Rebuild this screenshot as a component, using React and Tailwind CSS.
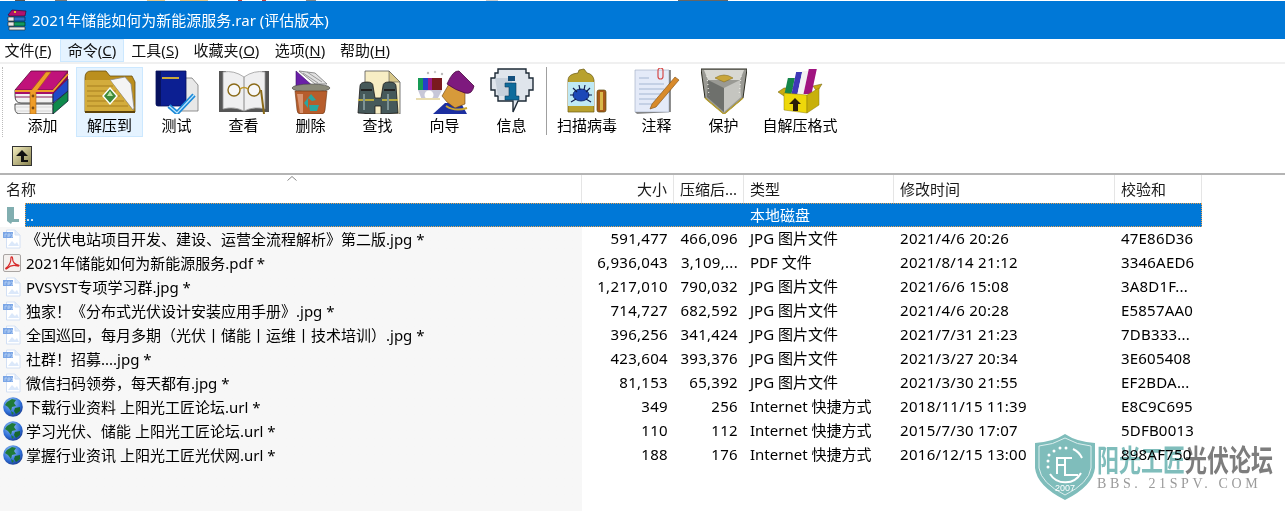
import React from 'react';

const FONT = "font-['Noto_Sans','Noto_Sans_CJK_SC',sans-serif]";

// --- toolbar drawings ---
const Books = () => (
  <svg viewBox="0 0 56 44" className="w-[56px] h-[44px] -ml-[3px]">
    <path d="M2 34 L40 34 L40 44 L8 44 Q2 44 2 39Z" fill="#f4f4f4" stroke="#222" strokeWidth="0.8" />
    <path d="M2 37 H40 M2 41 H40" stroke="#c9c9c9" strokeWidth="0.7" />
    <path d="M40 34 L55 21 L55 31 L40 44Z" fill="#0f8a4c" stroke="#123" strokeWidth="0.8" />
    <path d="M2 20 L40 20 L40 33 L8 33 Q2 33 2 26Z" fill="#f2f2f2" stroke="#222" strokeWidth="0.8" />
    <path d="M2 27 H40" stroke="#8a1c58" strokeWidth="1.2" />
    <path d="M40 20 L55 9 L55 21 L40 33Z" fill="#1f49c8" stroke="#123" strokeWidth="0.8" />
    <path d="M2 20 L18 1 L55 1 L40 20Z" fill="#c0127a" stroke="#5a0838" strokeWidth="0.8" />
    <path d="M2 20 L40 20 L40 24 L2 24Z" fill="#a50e68" />
    <path d="M40 20 L55 1 L55 9 L40 24Z" fill="#7d0c50" />
    <path d="M17 22 L33 2 L38 2 L23 22 L23 44 L17 44Z" fill="#ef9d28" stroke="#9a5a10" strokeWidth="0.6" />
    <path d="M2 21 H40 L55 4" fill="none" stroke="#ef9d28" strokeWidth="1.8" />
    <circle cx="20" cy="26" r="1.4" fill="#7a4a10" />
    <circle cx="20" cy="38" r="1.4" fill="#7a4a10" />
  </svg>
);

const Extract = () => (
  <svg viewBox="0 0 52 44" className="w-[52px] h-[44px]">
    <path d="M1 8 Q1 1 7 1 L22 1 L26 6 L48 6 L51 12 L51 42 L1 42Z" fill="#bb8f1e" stroke="#6b4e0c" strokeWidth="0.8" />
    <path d="M26 10 L41 7 L47 14 L50 38 L49 40Z" fill="#f4f4f4" stroke="#8a8a8a" strokeWidth="0.8" />
    <path d="M1 10 L26 10 L50 42 L1 42Z" fill="#d3ac3c" />
    <path d="M3 16H29M3 21H32M3 26H36M3 31H40M3 36H44" stroke="#a87f1e" strokeWidth="1.1" />
    <path d="M1 42 L51 42" stroke="#5e440a" strokeWidth="1.8" />
    <path d="M26 18 L33 26 L26 34 L19 26Z" fill="#3e8a3a" stroke="#fff" strokeWidth="1.4" />
    <path d="M26 21 L29 26 L23 26Z" fill="#b6e0a0" />
  </svg>
);

const Test = () => (
  <svg viewBox="0 0 44 44" className="w-[44px] h-[44px]">
    <path d="M26 8 L37 8 L43 15 L43 41 L26 41Z" fill="#e8e8e8" stroke="#777" strokeWidth="0.8" />
    <path d="M1 1 L31 1 L31 36 L3 36 Q1 36 1 34Z" fill="#0c1f92" stroke="#05105a" strokeWidth="0.8" />
    <path d="M1 1 L6 1 L6 36 L3 36 Q1 36 1 34Z" fill="#07125f" />
    <path d="M7 8 H24" stroke="#c9a93a" strokeWidth="2" />
    <path d="M14 36 L22 43 L39 25" fill="none" stroke="#1b8ad8" strokeWidth="4.5" />
    <path d="M14 36 L22 43 L39 25" fill="none" stroke="#bfe6ff" strokeWidth="1.2" />
  </svg>
);

const View = () => (
  <svg viewBox="0 0 52 44" className="w-[52px] h-[44px]">
    <path d="M1 1 L8 1 L8 38 L44 38 L44 1 L51 1 L51 42 L1 42Z" fill="#555" />
    <path d="M5 2 Q16 0 26 7 Q36 0 47 2 L47 39 Q36 36 26 41 Q16 36 5 39Z" fill="#efeff0" stroke="#9a9a9a" strokeWidth="0.8" />
    <path d="M26 7 L26 41" stroke="#888" strokeWidth="1" />
    <circle cx="16" cy="20" r="6" fill="#f7f7f7" stroke="#8a6a18" strokeWidth="1.4" />
    <circle cx="36" cy="20" r="6" fill="#f7f7f7" stroke="#8a6a18" strokeWidth="1.4" />
    <path d="M22 19 Q26 16 30 19" fill="none" stroke="#c09a2a" strokeWidth="1.6" />
    <path d="M43 20 L46 44" stroke="#8a6a18" strokeWidth="2" />
  </svg>
);

const Recycle = () => (
  <svg viewBox="0 0 40 44" className="w-[40px] h-[44px]">
    <path d="M5 1 L5 18 L24 18Z" fill="#6a1fa8" stroke="#3a0f66" strokeWidth="0.6" />
    <path d="M8 1 L24 14 L36 14 L24 3Z" fill="#e2e2e2" stroke="#777" strokeWidth="0.8" />
    <path d="M12 3 L27 13 M16 2 L31 12" stroke="#999" strokeWidth="1" />
    <ellipse cx="20" cy="18" rx="19" ry="4" fill="#8a8a7a" stroke="#444" strokeWidth="0.6" />
    <path d="M4 21 L36 21 L34 40 Q34 44 30 44 L10 44 Q6 44 6 40Z" fill="#b75d2c" stroke="#6b3514" strokeWidth="0.6" />
    <path d="M6 24 L12 24 L12 43 L9 43Z" fill="#d99470" />
    <path d="M20 24 L25 30 L21 31 L17 28Z M13 33 L17 28 L17 38Z M19 41 L18 35 L28 35 L26 41Z" fill="#2aa6a0" />
  </svg>
);

const Find = () => (
  <svg viewBox="0 0 46 44" className="w-[46px] h-[44px]">
    <path d="M10 1 L34 1 L45 12 L45 44 L10 44Z" fill="#f7edc4" stroke="#555" strokeWidth="0.8" />
    <path d="M34 1 L34 12 L45 12Z" fill="#d8c88a" stroke="#555" strokeWidth="0.6" />
    <path d="M5 16 Q5 12 12 12 Q18 12 18 16 L20 28 L26 28 L28 16 Q28 12 34 12 Q41 12 41 16 L43 43 L26 44 L26 36 L20 36 L20 44 L3 43Z" fill="#46595a" stroke="#1a1a1a" strokeWidth="0.8" />
    <path d="M6 20 H17 M29 20 H40" stroke="#222" strokeWidth="2" />
    <path d="M3 30 H19 M27 30 H43" stroke="#d8c23a" strokeWidth="1.6" />
    <path d="M9 24 V40 M33 24 V40" stroke="#7d9394" strokeWidth="2" />
  </svg>
);

const Wizard = () => (
  <svg viewBox="0 0 60 44" className="w-[60px] h-[44px]">
    <rect x="3" y="8" width="24" height="12" fill="#7a1a1e" />
    <rect x="3" y="8" width="5" height="12" fill="#169b55" />
    <rect x="8" y="8" width="5" height="12" fill="#2440c8" />
    <rect x="13" y="8" width="4" height="12" fill="#9a1a8a" />
    <path d="M3 20 L27 20 L22 30 L7 30Z" fill="#c7c7d8" />
    <circle cx="14" cy="25" r="4.5" fill="#fff" />
    <path d="M1 29 H25" stroke="#e8dcb0" strokeWidth="2" />
    <circle cx="13" cy="3" r="1.2" fill="#bbb" /><circle cx="20" cy="2" r="1.2" fill="#ccc" /><circle cx="27" cy="4" r="1.2" fill="#bbb" />
    <path d="M18 44 L30 33 L46 33 L52 44Z" fill="#1c2fa0" />
    <path d="M34 14 L50 16 L50 34 L40 38 L32 32 L27 26Z" fill="#d79a3a" stroke="#6a4210" strokeWidth="0.6" />
    <path d="M32 14 Q38 0 44 1 L59 16 Q57 25 50 23 Q40 20 32 14Z" fill="#7e1a7e" stroke="#4a0a40" strokeWidth="0.8" />
    <path d="M31 36 Q40 42 52 38" fill="none" stroke="#c7a532" strokeWidth="2" />
  </svg>
);

const Info = () => (
  <svg viewBox="0 0 44 46" className="w-[44px] h-[46px]">
    <path d="M8 1 H36 V5 H39 V10 H43 V22 H39 V28 H36 V33 H28 L23 44 V33 H8 V28 H5 V22 H1 V10 H5 V5 H8Z" fill="#dfe5ec" stroke="#1d2a36" strokeWidth="1.4" />
    <path d="M5 10 H22 V28 H8Z" fill="#b5c2d0" opacity="0.6" />
    <rect x="18" y="8" width="7" height="5" fill="#14507e" />
    <path d="M15 15 H26 V28 H29 V32 H15 V28 H19 V19 H15Z" fill="#0e6c9c" stroke="#0b3a5c" strokeWidth="0.6" />
  </svg>
);

const Scan = () => (
  <svg viewBox="0 0 42 46" className="w-[42px] h-[46px]">
    <path d="M2 12 Q2 6 12 5 L13 2 L18 1 L21 5 Q27 6 28 12 L28 44 L2 44Z" fill="#b8a12e" stroke="#6a5a10" strokeWidth="0.7" />
    <rect x="2" y="14" width="26" height="24" fill="#bfe9f5" />
    <ellipse cx="15" cy="27" rx="8" ry="6" fill="#1c48b8" stroke="#0a1c60" strokeWidth="0.8" />
    <path d="M7 20 L11 24 M13 17 L14 22 M19 17 L18 22 M24 20 L20 24 M5 34 L10 31 M25 34 L20 31 M4 27 H8 M22 27 H26" stroke="#101c50" strokeWidth="1.2" />
    <rect x="31" y="22" width="9" height="22" rx="2" fill="#a85a1a" stroke="#5a4a10" strokeWidth="0.7" />
    <rect x="34" y="24" width="3" height="18" fill="#d9b84a" />
  </svg>
);

const Note = () => (
  <svg viewBox="0 0 46 46" className="w-[46px] h-[46px]">
    <path d="M1 2 H35 V44 H1Z" fill="#e4eaf8" stroke="#9aa7c0" strokeWidth="0.6" />
    <path d="M35 2 H37 V44 L3 46 L1 44 H35Z" fill="#444" opacity="0.6" />
    <path d="M5 10 H15 M5 16 H30 M5 21 H30 M5 26 H30 M5 31 H22 M5 36 H18" stroke="#a4b6d2" strokeWidth="1.2" />
    <rect x="24" y="0" width="5" height="11" rx="2.5" fill="none" stroke="#d64a4a" strokeWidth="1.2" />
    <path d="M18 36 L41 9 L45 12 L22 39 L16 41Z" fill="#d88a2a" stroke="#7a4a10" strokeWidth="0.6" />
  </svg>
);

const Shield = () => (
  <svg viewBox="0 0 46 46" className="w-[46px] h-[46px]">
    <path d="M0 1 H46 L42 30 L23 46 L4 30Z" fill="#9a9a94" stroke="#2a2a20" strokeWidth="1" />
    <path d="M3 2 H43 L39 12 H7Z" fill="#d8d8d2" />
    <path d="M7 12 L23 20 L23 44 L6 29Z" fill="#6e706c" />
    <path d="M39 12 L23 20 L23 44 L40 29Z" fill="#c5c5c0" />
    <path d="M14 10 Q23 4 32 10 L23 14Z" fill="#c9a63a" stroke="#7a6210" strokeWidth="0.5" />
    <path d="M4 30 L23 46 L42 30" fill="none" stroke="#b8a030" strokeWidth="1.4" />
    <path d="M6 8 L8 28 M40 8 L38 28" stroke="#e8e8e0" strokeWidth="1.2" strokeDasharray="1 3" />
  </svg>
);

const Sfx = () => (
  <svg viewBox="0 0 46 46" className="w-[46px] h-[46px]">
    <path d="M7 20 L1 24 L10 30 L16 20Z M36 18 L45 16 L40 24Z" fill="#c9ab12" stroke="#6a5a08" strokeWidth="0.5" />
    <rect x="8" y="10" width="7" height="16" fill="#15864a" transform="skewX(-12) translate(5 0)" />
    <rect x="15" y="4" width="6" height="22" fill="#3f38b8" transform="skewX(-12) translate(5 0)" />
    <rect x="21" y="3" width="6" height="23" fill="#f2f2f2" transform="skewX(-12) translate(5 0)" />
    <rect x="27" y="1" width="8" height="25" fill="#a01480" transform="skewX(-12) translate(5 0)" />
    <path d="M7 25 L30 27 L30 45 L7 42Z" fill="#eed80a" stroke="#8a7a08" strokeWidth="0.5" />
    <path d="M30 27 L42 20 L42 37 L30 45Z" fill="#c8b00a" stroke="#8a7a08" strokeWidth="0.5" />
    <path d="M18 30 L24 36 L21 36 L21 43 L16 43 L16 36 L12 36Z" fill="#2a1c08" />
  </svg>
);

const UpButton = () => (
  <div className="w-5 h-5 border border-[#333] bg-gradient-to-br from-[#f4eec0] to-[#8a8450] flex items-center justify-center">
    <svg viewBox="0 0 16 16" className="w-4 h-4">
      <path d="M8 2 L14 8 L10 8 L10 12 L14 12 L14 14 L7 14 L7 8 L2 8Z" fill="#111" />
    </svg>
  </div>
);

// --- file list icons ---
const JpgIcon = () => (
  <svg viewBox="0 0 18 20" className="w-[18px] h-5">
    <path d="M3.5 1 H12 L17 6 V19 H3.5Z" fill="#fff" stroke="#d3e0f4" />
    <path d="M12 1 V6 H17" fill="#e4edfa" stroke="#d3e0f4" />
    <rect x="0" y="3" width="10" height="6" fill="#7aa5e6" />
    <path d="M2 8 V5 H4 M5 8 V5 H7 V7 H5 M8 5 H9.5 V8 H8" stroke="#d5e4fa" strokeWidth="0.6" fill="none" />
    <path d="M5 17 L9 12 L12 15 L14 13 L16 17Z" fill="#dbe8fa" />
  </svg>
);

const PdfIcon = () => (
  <svg viewBox="0 0 18 18" className="w-[18px] h-[18px]">
    <rect x="0.5" y="0.5" width="17" height="17" rx="1.5" fill="#f4f0ee" stroke="#a9a5a3" />
    <path d="M3 14 C6 12 8 8 8 3.5 C8 2.5 9.5 2.5 9.5 4 C9.5 8 12 11 15.5 11 C16.5 11 16 12.5 14.5 12 C11 11 7 11.5 4 14.5 C3 15.5 2.2 14.6 3 14Z" fill="none" stroke="#d62a2a" strokeWidth="1.2" />
  </svg>
);

const GlobeIcon = () => (
  <svg viewBox="0 0 20 20" className="w-5 h-5">
    <defs>
      <radialGradient id="sea" cx="0.4" cy="0.3" r="0.8">
        <stop offset="0" stopColor="#9cc8f4" />
        <stop offset="0.6" stopColor="#2f6fd8" />
        <stop offset="1" stopColor="#16307e" />
      </radialGradient>
    </defs>
    <circle cx="10" cy="10" r="9.8" fill="url(#sea)" />
    <path d="M4 5 L9 2 L13 3 L11 6 L13 9 L9 10 L8 14 L5 10 L2 8Z" fill="#1f7a38" />
    <path d="M12 11 L17 10 L17 14 L13 17 L11 14Z" fill="#17682e" />
    <path d="M8 14 L11 16 L9 18Z" fill="#1f7a38" />
  </svg>
);

const tools = [
  ['添加', Books, 'w-[67px]'],
  ['解压到', Extract, 'w-[67px]', true],
  ['测试', Test, 'w-[67px]'],
  ['查看', View, 'w-[67px]'],
  ['删除', Recycle, 'w-[67px]'],
  ['查找', Find, 'w-[67px]'],
  ['向导', Wizard, 'w-[67px]'],
  ['信息', Info, 'w-[67px]'],
];
const tools2 = [
  ['扫描病毒', Scan, 'w-[72px]'],
  ['注释', Note, 'w-[67px]'],
  ['保护', Shield, 'w-[67px]'],
  ['自解压格式', Sfx, 'w-[86px]'],
];

const menus = [
  ['文件', 'F', 'w-[60px] pr-[4px]'],
  ['命令', 'C', 'w-[64px]', true],
  ['工具', 'S', 'w-[62px]'],
  ['收藏夹', 'O', 'w-[81px]'],
  ['选项', 'N', 'w-[66px]'],
  ['帮助', 'H', 'w-[64px]'],
];

// 1px sliver of the window behind, above the title bar
const sliver = [
  ['w-[15px]', 'bg-white'], ['w-[10px]', 'bg-[#555]'], ['w-[30px]', 'bg-white'], ['w-[12px]', 'bg-[#777]'],
  ['w-[80px]', 'bg-white'], ['w-[18px]', 'bg-[#e8c98a]'], ['w-[15px]', 'bg-white'], ['w-[28px]', 'bg-[#e8c98a]'],
  ['w-[30px]', 'bg-white'], ['w-[4px]', 'bg-[#c04040]'], ['w-[20px]', 'bg-white'], ['w-[4px]', 'bg-[#c04040]'],
  ['w-[40px]', 'bg-white'], ['w-[10px]', 'bg-[#888]'], ['w-[170px]', 'bg-white'], ['w-[12px]', 'bg-[#ccc]'],
  ['w-[180px]', 'bg-white'], ['w-[50px]', 'bg-[#666]'],
];

const files = [
  ['《光伏电站项目开发、建设、运营全流程解析》第二版.jpg *', '591,477', '466,096', 'JPG 图片文件', '2021/4/6 20:26', '47E86D36', JpgIcon],
  ['2021年储能如何为新能源服务.pdf *', '6,936,043', '3,109,...', 'PDF 文件', '2021/8/14 21:12', '3346AED6', PdfIcon],
  ['PVSYST专项学习群.jpg *', '1,217,010', '790,032', 'JPG 图片文件', '2021/6/6 15:08', '3A8D1F...', JpgIcon],
  ['独家！《分布式光伏设计安装应用手册》.jpg *', '714,727', '682,592', 'JPG 图片文件', '2021/4/6 20:28', 'E5857AA0', JpgIcon],
  ['全国巡回，每月多期（光伏丨储能丨运维丨技术培训）.jpg *', '396,256', '341,424', 'JPG 图片文件', '2021/7/31 21:23', '7DB333...', JpgIcon],
  ['社群！招募....jpg *', '423,604', '393,376', 'JPG 图片文件', '2021/3/27 20:34', '3E605408', JpgIcon],
  ['微信扫码领劵，每天都有.jpg *', '81,153', '65,392', 'JPG 图片文件', '2021/3/30 21:55', 'EF2BDA...', JpgIcon],
  ['下载行业资料 上阳光工匠论坛.url *', '349', '256', 'Internet 快捷方式', '2018/11/15 11:39', 'E8C9C695', GlobeIcon],
  ['学习光伏、储能 上阳光工匠论坛.url *', '110', '112', 'Internet 快捷方式', '2015/7/30 17:07', '5DFB0013', GlobeIcon],
  ['掌握行业资讯 上阳光工匠光伏网.url *', '188', '176', 'Internet 快捷方式', '2016/12/15 13:00', '898AF750', GlobeIcon],
];

const ToolButton = ({ label, Icon, width, active }) => (
  <div className={`${width} h-[70px] flex flex-col items-center border ${active ? 'bg-[#e5f3ff] border-[#cce8ff]' : 'border-transparent'}`}>
    <div className="h-[46px] flex items-end justify-center shrink-0">
      <Icon />
    </div>
    <span className="mt-[1px] text-[15px] leading-5 text-black whitespace-nowrap">{label}</span>
  </div>
);

const HeaderCell = ({ className, children }) => (
  <div className={`${className} h-full border-r border-[#e5e5e5] px-[6px] flex items-center text-[15px] text-[#1a1a1a] whitespace-nowrap`}>
    {children}
  </div>
);

const Row = ({ file }) => {
  const [name, size, packed, type, date, crc, Icon] = file;
  return (
    <div className="flex h-6 items-center text-[15px] text-black whitespace-nowrap">
      <div className="w-[582px] h-full flex items-center">
        <div className="w-[26px] pl-[3px] flex justify-start shrink-0">
          <Icon />
        </div>
        <span className="leading-6 pb-px">{name}</span>
      </div>
      <div className="w-[92px] pr-[6px] pb-px text-right tracking-[0.3px]">{size}</div>
      <div className="w-[70px] pr-[6px] pb-px text-right tracking-[0.3px]">{packed}</div>
      <div className="w-[150px] pl-[6px] pb-px">{type}</div>
      <div className="w-[221px] pl-[6px] pb-px tracking-[0.3px]">{date}</div>
      <div className="w-[87px] pl-[6px] pb-px tracking-[0.2px]">{crc}</div>
    </div>
  );
};

export default function App() {
  return (
    <div className={`${FONT} relative w-[1285px] h-[512px] overflow-hidden bg-white`}>
      <div className="h-px flex">
        {sliver.map(([width, color], i) => (
          <div key={i} className={`${width} ${color}`} />
        ))}
      </div>

      {/* Title bar */}
      <div className="h-[38px] bg-[#0078d7] flex items-center pl-[7px] gap-[5px] text-white">
        <svg viewBox="0 0 20 22" className="w-5 h-[22px] shrink-0">
          <path d="M1 6 L5 1 L19 2 L18 7 L3 7Z" fill="#b0116e" stroke="#3a0830" strokeWidth="0.7" />
          <path d="M2 8 H18 V12 H2Z" fill="#2c6fc8" stroke="#0c2a50" strokeWidth="0.7" />
          <path d="M2 13 H18 V17 H2Z" fill="#129a60" stroke="#06381f" strokeWidth="0.7" />
          <path d="M2 18 H18 V21 H2Z" fill="#e8e8e8" stroke="#333" strokeWidth="0.7" />
          <path d="M1 8 H7 V12 H1Z M1 13 H7 V17 H1Z" fill="#e8e8e8" stroke="#333" strokeWidth="0.7" />
          <path d="M7 3 L9 3" stroke="#e8c22a" strokeWidth="2" />
        </svg>
        <span className="text-[15px] leading-6">2021年储能如何为新能源服务.rar (评估版本)</span>
      </div>

      {/* Menu */}
      <div className="h-[23px] flex items-stretch border-b-2 border-[#f0f0f0] box-content">
        {menus.map(([label, key, width, active]) => (
          <div key={label} className={`${width} flex items-center justify-center text-[15px] text-[#111] whitespace-nowrap border ${active ? 'bg-[#e5f3ff] border-[#cce8ff]' : 'border-transparent'}`}>
            {label}(<span className="underline">{key}</span>)
          </div>
        ))}
      </div>

      {/* Toolbar */}
      <div className="h-[109px] border-b-2 border-[#b4b4b4] box-content pl-[2px]">
        <div className="flex items-start pt-[3px]">
          <div className="w-[7px] h-[70px] border-l border-dotted border-[#bbb]" />
          {tools.map(([label, Icon, width, active]) => (
            <ToolButton key={label} label={label} Icon={Icon} width={width} active={active} />
          ))}
          <div className="w-px h-[68px] bg-[#a0a0a0] ml-[1px] mr-[4px]" />
          {tools2.map(([label, Icon, width]) => (
            <ToolButton key={label} label={label} Icon={Icon} width={width} />
          ))}
        </div>
        <div className="ml-[10px] mt-[9px]">
          <UpButton />
        </div>
      </div>

      {/* Column headers */}
      <div className="relative h-[28px] flex items-stretch bg-white">
        <HeaderCell className="w-[582px]">名称</HeaderCell>
        <HeaderCell className="w-[92px] justify-end">大小</HeaderCell>
        <HeaderCell className="w-[70px]">压缩后...</HeaderCell>
        <HeaderCell className="w-[150px]">类型</HeaderCell>
        <HeaderCell className="w-[221px]">修改时间</HeaderCell>
        <HeaderCell className="w-[87px]">校验和</HeaderCell>
        <svg viewBox="0 0 10 5" className="absolute left-[287px] top-[1px] w-[10px] h-[5px]">
          <path d="M0.5 4.5 L5 0.5 L9.5 4.5" fill="none" stroke="#888" />
        </svg>
      </div>

      {/* File list */}
      <div className="flex h-[308px]">
        <div className="w-[1285px] bg-gradient-to-r from-[#f7f7f7] from-[582px] to-white to-[582px]">
          <div className="flex h-6 items-center text-[15px] whitespace-nowrap w-[1202px]">
            <div className="w-[25px] h-full bg-white flex justify-start pl-[6px] shrink-0">
              <svg viewBox="0 0 14 18" className="w-[14px] h-[18px] mt-[3px]">
                <path d="M1 1 H8 V13 H13 V16 H6 L5 18 L1 15Z" fill="#81aeb0" />
              </svg>
            </div>
            <div className="flex-1 h-full flex items-center bg-[#0078d7] text-white border border-dotted border-[#e8a050]">
              <span className="w-[556px] leading-5">..</span>
              <span className="w-[92px]" />
              <span className="w-[70px]" />
              <span className="pl-[6px]">本地磁盘</span>
            </div>
          </div>
          {files.map((f) => (
            <Row key={f[0]} file={f} />
          ))}
        </div>
      </div>

      {/* Forum watermark */}
      <div className="absolute left-[1035px] top-[434px] flex items-start gap-[2px] mix-blend-multiply">
        <svg viewBox="0 0 60 66" className="w-[60px] h-[66px]">
          <path d="M30 0 Q42 8 60 9 L60 34 Q58 52 30 66 Q2 52 0 34 L0 9 Q18 8 30 0Z" fill="#7fbdbb" />
          <path d="M30 4 Q42 11 56 12 L56 34 Q54 49 30 61 Q6 49 4 34 L4 12 Q18 11 30 4Z" fill="none" stroke="#ddeeee" strokeWidth="1" />
          <path d="M38 15 A18 18 0 0 1 47 24 M46 39 A18 18 0 0 1 15 40" fill="none" stroke="#fff" strokeWidth="2" />
          <circle cx="13" cy="27" r="1.5" fill="#fff" /><circle cx="14" cy="21" r="1.5" fill="#fff" /><circle cx="19" cy="17" r="1.5" fill="#fff" /><circle cx="25" cy="14" r="1.5" fill="#fff" /><circle cx="31" cy="14" r="1.5" fill="#fff" /><circle cx="13" cy="33" r="1.5" fill="#fff" />
          <path d="M22 40 V24 H37 M22 31 H30 M30 25 V41 H43" fill="none" stroke="#fff" strokeWidth="2" />
          <text x="30" y="57" textAnchor="middle" fontSize="9" fill="#fff" fontFamily="Liberation Sans">2007</text>
        </svg>
        <div className="flex flex-col pt-[8px]">
          <div className="text-[22px] leading-[32px] font-bold scale-y-[1.35] whitespace-nowrap font-['Noto_Sans_CJK_SC',sans-serif]">
            <span className="text-[#7fbdbb]">阳光工匠</span>
            <span className="text-[#7d7d7d]">光伏论坛</span>
          </div>
          <div className="mt-[2px] text-[14px] leading-4 tracking-[3.6px] text-[#9a9a9a] whitespace-nowrap font-['Liberation_Serif',serif]">
            BBS. 21SPV. COM
          </div>
        </div>
      </div>
    </div>
  );
}
